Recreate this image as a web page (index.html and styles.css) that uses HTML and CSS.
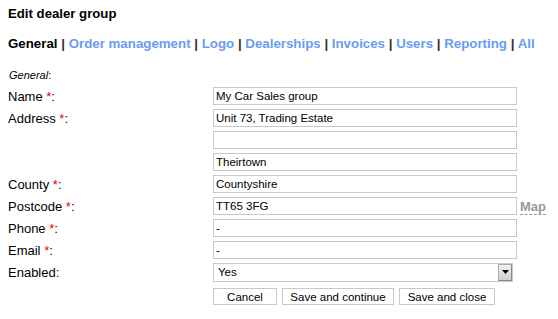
FILE: index.html
```html
<!DOCTYPE html>
<html lang="en">
<head>
<meta charset="utf-8">
<title>Edit dealer group</title>
<link rel="stylesheet" href="styles.css">
</head>
<body>
<h1>Edit dealer group</h1>
<div class="tabs">
  <b>General</b> | <a href="#">Order management</a> | <a href="#">Logo</a> | <a href="#">Dealerships</a> | <a href="#">Invoices</a> | <a href="#">Users</a> | <a href="#">Reporting</a> | <a href="#">All</a>
</div>
<div class="section"><i>General</i>:</div>
<table class="form">
  <tr><th>Name <span class="req">*</span>:</th><td><input type="text" value="My Car Sales group"></td></tr>
  <tr><th>Address <span class="req">*</span>:</th><td><input type="text" value="Unit 73, Trading Estate"></td></tr>
  <tr><th></th><td><input type="text" value=""></td></tr>
  <tr><th></th><td><input type="text" value="Theirtown"></td></tr>
  <tr><th>County <span class="req">*</span>:</th><td><input type="text" value="Countyshire"></td></tr>
  <tr><th>Postcode <span class="req">*</span>:</th><td><input type="text" value="TT65 3FG"><a href="#" class="map">Map</a></td></tr>
  <tr><th>Phone <span class="req">*</span>:</th><td><input type="text" value="-"></td></tr>
  <tr><th>Email <span class="req">*</span>:</th><td><input type="text" value="-"></td></tr>
  <tr><th>Enabled:</th><td>
    <span class="selwrap">
      <select><option>Yes</option><option>No</option></select>
      <span class="arrow"><svg width="7" height="4" viewBox="0 0 7 4"><path d="M0 0h7L3.5 4z" fill="#000"/></svg></span>
    </span>
  </td></tr>
  <tr class="btnrow"><th></th><td>
    <button class="b-cancel">Cancel</button><button class="b-cont">Save and continue</button><button class="b-close">Save and close</button>
  </td></tr>
</table>
</body>
</html>
```

FILE: styles.css
```css
* {font-family:"Liberation Sans",Arial,sans-serif;}
body {margin: 5px 8px; color: #000; background: #fff;}
h1 {font-size: 13.2px; font-weight: bold; margin: 0; line-height: 18px;}
.tabs {font-size: 13.3px; font-weight: bold; margin-top: 12px; line-height: 18px; color: #333;}
.tabs b {color: #000;}
.tabs a {color: #6b9cf0; text-decoration: none;}
.section {font-size: 11px; margin-top: 15px; line-height: 14px; padding-left: 1px;}
.form {border-collapse: collapse; margin-top: 3px;}
.form th {font-size: 13px; font-weight: normal; text-align: left; width: 204px; padding: 0; height: 22px; vertical-align: middle;}
.form td {padding: 0; height: 22px; vertical-align: middle; white-space: nowrap;}
.req {color: #e00;}
.form input {width: 304px; height: 18px; box-sizing: border-box; border: 1px solid #c8c8c8; font-size: 11.5px; padding: 0 2px; margin: 0 0 0 1px; vertical-align: middle; color: #000;}
.map {font-size: 13px; font-weight: bold; color: #999; text-decoration: none; border-bottom: 1px dashed #999; margin-left: 3px; vertical-align: middle;}
.selwrap {position: relative; display: inline-block; vertical-align: middle; margin-left: 1px;}
.selwrap select {width: 300px; height: 19px; box-sizing: border-box; border: 1px solid #c8c8c8; background: #fff; font-size: 11.5px; padding: 0 4px; margin: 0; -webkit-appearance: none; appearance: none; border-radius: 0; display: block; color: #000;}
.arrow {position: absolute; right: 1px; top: 1px; width: 14px; height: 17px; box-sizing: border-box; background: linear-gradient(#f2f2f2, #d0d0d0); border: 1px solid #aaa; border-right-color: #888; border-bottom-color: #888; display: flex; align-items: center; justify-content: center;}
.arrow svg {display: block;}
.btnrow td {height: 22px; vertical-align: bottom;}
.btnrow button {height: 17px; box-sizing: border-box; border: 1px solid #c8c8c8; background: #fff; font-size: 11.5px; padding: 0; margin: 0 5px 0 0; border-radius: 0; color: #000;}
.btnrow .b-cancel {width: 64px; margin-left: 1px;}
.btnrow .b-cont {width: 112px;}
.btnrow .b-close {width: 96px;}
```
